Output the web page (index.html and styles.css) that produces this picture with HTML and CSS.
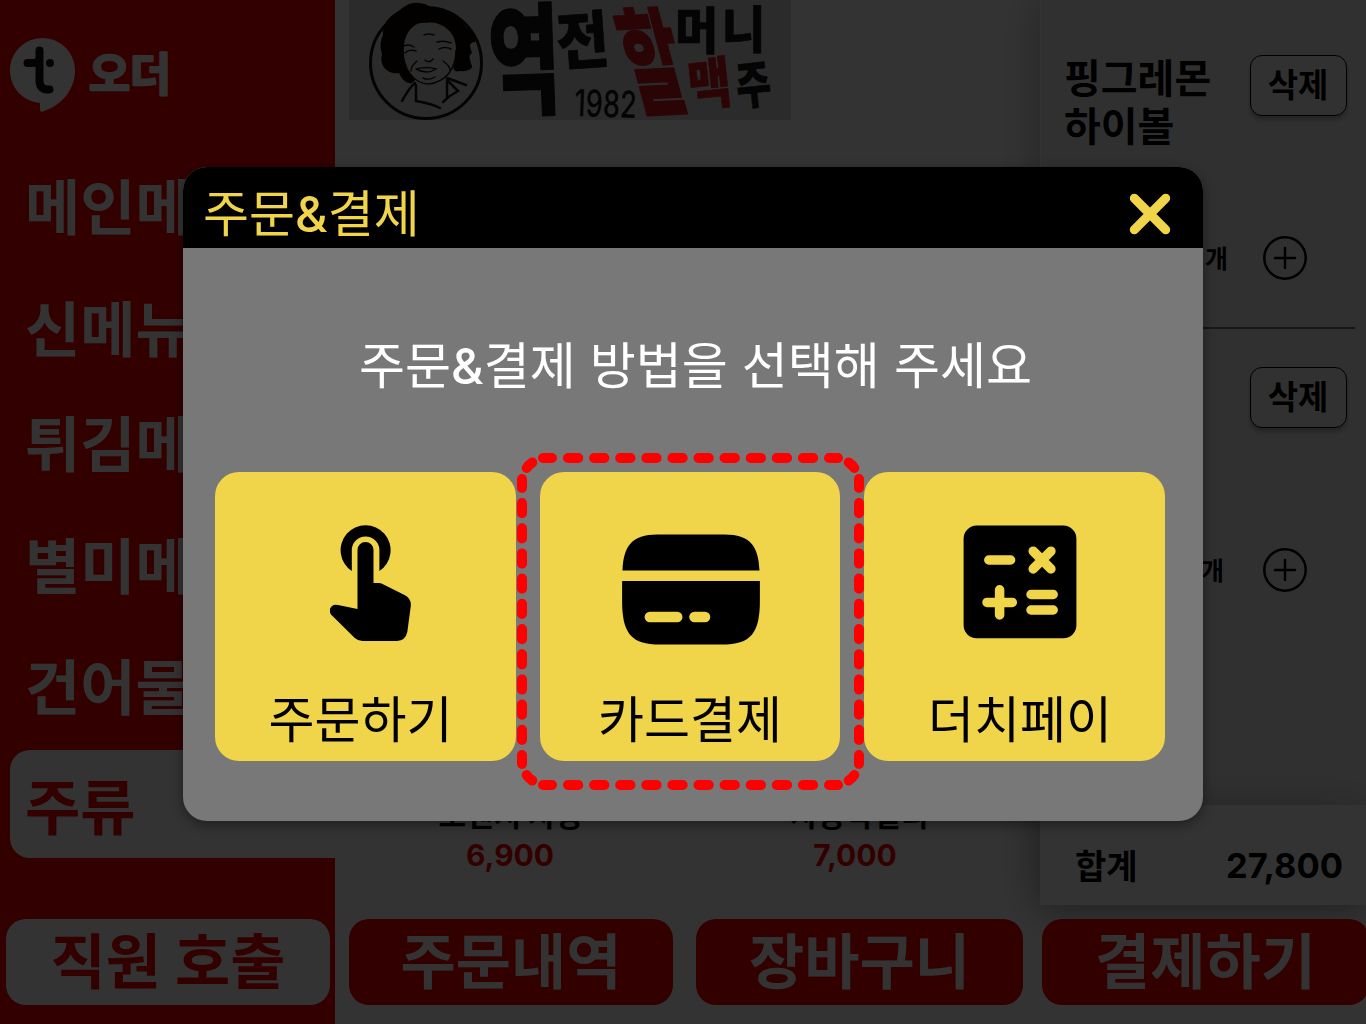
FILE: index.html
```html
<!DOCTYPE html>
<html lang="ko">
<head>
<meta charset="utf-8">
<title>주문&amp;결제</title>
<link rel="stylesheet" href="styles.css">
</head>
<body>
<div class="app">
  <aside class="sidebar">
    <div class="brand">
      <svg class="brand-mark" width="66" height="76" viewBox="0 0 66 76">
        <path fill="#fff" d="M32.500 1C50.500 1 65 15.500 65 33.500C65 54 50 69 33 74.500Q30 75.500 30 73V66C12 64 0 50 0 33.500C0 15.500 14.500 1 32.500 1Z"/>
        <path fill="none" stroke="#111" stroke-width="8" stroke-linecap="round" stroke-linejoin="round" d="M29.500 13.500V44Q29.500 53 39.500 52.500M17.500 26H24Q29 26 29.500 20"/>
        <circle cx="40" cy="26" r="4" fill="#111"/>
      </svg>
      <svg class="brand-name" width="90" height="60" viewBox="0 0 90 60"><text class="wordmark" transform="translate(0 45) scale(.97 .98)">오더</text></svg>
    </div>
    <nav class="menu">
      <a class="menu-item">메인메뉴</a>
      <a class="menu-item">신메뉴</a>
      <a class="menu-item">튀김메뉴</a>
      <a class="menu-item">별미메뉴</a>
      <a class="menu-item">건어물</a>
      <a class="menu-item active">주류</a>
    </nav>
    <button class="call">직원 호출</button>
  </aside>
  <div class="content">
    <div class="upper">
      <main class="catalog">
        <svg class="banner" width="442" height="120" viewBox="0 0 442 120">
          <circle cx="77" cy="63" r="55.500" fill="none" stroke="#111" stroke-width="3"/>
          <path fill="#0d0803" fill-rule="evenodd" d="M34 35C33 20 45 14 51 10C60 1 74 0 84 9C99 7 112 17 116 26C123 31 128 36 126 42C118 43 122 48 123 53C118 56 122 60 122 64C126 68 119 72 111 71C104 73 103 68 106 60C108 50 107 42 104 36C99 27 88 21 77 23C65 21 56 33 55 46C54 61 56 70 66 79C64 87 54 83 50 73C38 75 30 65 33 54C31 47 31 42 34 35Z"/>
          <g fill="none" stroke="#1a1713" stroke-width="1.500" stroke-linecap="round">
            <path d="M54 50C54 69 65 84 80 84C96 82 107 70 107 50M53 47Q59 43 65 47M88 42Q95 40 102 43M56 53Q60 49 67 51M90 49Q96 46 102 49M75 35Q80 33 85 35M68 61Q62 66 62 71M94 61Q101 66 101 70M67 69Q78 66 87 69Q78 75 67 69M76 60Q80 64 84 59M74 78Q80 81 86 77"/>
            <path stroke-width="2.500" d="M66 83Q60 88 53 101M67 85V101Q84 104 91 108M98 80L109 91Q101 95 94 102M98 82V98M98 78L117 85"/>
          </g>
          <g class="brush">
            <text transform="translate(141 106) rotate(-2) scale(.93 1.440)">역</text>
            <text transform="translate(209 65) rotate(-4) scale(.68 .74)">전</text>
            <text class="red" transform="translate(286 106) rotate(-3) skewX(12) scale(.74 1.380)">할</text>
            <text transform="translate(326 49) scale(.56 .6)">머</text>
            <text transform="translate(373 48) scale(.56 .6)">니</text>
            <text class="red" transform="translate(341 106) rotate(-6) scale(.56 .66)">맥</text>
            <text transform="translate(389 105) rotate(-6) scale(.45 .6)">주</text>
            <text class="year" transform="translate(225 116) rotate(2) scale(.8 1.100)">1982</text>
          </g>
        </svg>
        <div class="products">
          <div class="product"><span class="product-name">오렌지 자몽</span><span class="price">6,900</span></div>
          <div class="product"><span class="product-name">자몽막걸리</span><span class="price">7,000</span></div>
        </div>
      </main>
      <section class="cart">
        <div class="cart-list">
          <article class="cart-item">
            <div class="item-head"><h2>핑그레몬<br>하이볼</h2><button class="delete">삭제</button></div>
            <div class="quantity"><span>개</span>
              <svg width="44" height="44" viewBox="0 0 44 44"><g fill="none" stroke="#000" stroke-width="2.500" stroke-linecap="round"><circle cx="22" cy="22" r="20.700"/><path d="M12 22H32M22 12V32"/></g></svg>
            </div>
          </article>
          <article class="cart-item second">
            <div class="item-head"><button class="delete">삭제</button></div>
            <div class="quantity"><span>개</span>
              <svg width="44" height="44" viewBox="0 0 44 44"><g fill="none" stroke="#000" stroke-width="2.500" stroke-linecap="round"><circle cx="22" cy="22" r="20.700"/><path d="M12 22H32M22 12V32"/></g></svg>
            </div>
          </article>
        </div>
        <div class="total"><span>합계</span><strong>27,800</strong></div>
      </section>
    </div>
    <div class="actions">
      <button>주문내역</button>
      <button>장바구니</button>
      <button>결제하기</button>
    </div>
  </div>
</div>
<div class="overlay">
  <div class="modal">
    <header class="modal-head">
      <h1>주문<span class="amp">&amp;</span>결제</h1>
      <svg width="42" height="42" viewBox="0 0 42 42"><path d="M5.300 5.300L36.700 36.700M36.700 5.300L5.300 36.700" stroke="#f0d44a" stroke-width="9" stroke-linecap="round"/></svg>
    </header>
    <p class="prompt">주문<span class="amp">&amp;</span>결제 방법을 선택해 주세요</p>
    <div class="options">
      <div class="option order">
        <svg width="82" height="118" viewBox="329.500 524 82 118">
          <path d="M351.300 571A25 25 0 1 1 378.900 571V550.300A13.800 13.800 0 0 0 351.300 550.300Z"/>
          <path d="M357 550A8 8 0 0 1 373 550V583H377.500Q380.500 583 383 584.400L404.500 595.300Q411 599 410.300 606L406.800 632Q405 640.500 396.500 641H362Q357.500 641 354.300 638L332 616A6.200 6.200 0 0 1 337.500 605L357 609Z"/>
        </svg>
        <span>주문하기</span>
      </div>
      <div class="option card selected">
        <svg width="140" height="112" viewBox="621.500 533 140 112">
          <path d="M623 570.600C624 546 632 534.400 658 534.400H725C751 534.400 759 546 760 570.600ZM622.600 581H760.400V600C760.400 633 752 644.600 722 644.600H661C631 644.600 622.600 633 622.600 600Z"/>
          <path d="M650.400 617H677.700M695 617H705.500" stroke="#f0d44a" stroke-width="10.600" stroke-linecap="round"/>
        </svg>
        <span>카드결제</span>
        <svg class="marker" width="347" height="337" viewBox="517 453 347 337">
          <g fill="none" stroke="#f00" stroke-width="10" stroke-linecap="round">
            <path stroke-dasharray="10.300 15.800" d="M568 458H814M568 785H814"/>
            <path stroke-dasharray="10.200 15" d="M522 503V741M859 503V741"/>
            <path d="M543 458H552M829 458H838M543 785H552M829 785H838M522 479V488M522 755V764M859 479V488M859 755V764"/>
            <path d="M526.700 468Q528.500 465 532.300 462.500M854.300 468Q852.500 465 848.700 462.500M526.700 775Q528.500 778 532.300 780.500M854.300 775Q852.500 778 848.700 780.500"/>
          </g>
        </svg>
      </div>
      <div class="option dutch">
        <svg width="114" height="114" viewBox="963 525 114 114">
          <rect x="963.600" y="525.600" width="112.800" height="112.700" rx="13"/>
          <path d="M988.800 560H1010.600M1033.200 551.200L1050.900 568.900M1050.900 551.200L1033.200 568.900M987 602.400H1012.300M999.600 589.800V615M1031 594.500H1053.200M1031 610H1053.200" stroke="#f0d44a" stroke-width="9.500" stroke-linecap="round"/>
        </svg>
        <span>더치페이</span>
      </div>
    </div>
  </div>
</div>
</body>
</html>
```
FILE: styles.css
```css
* { box-sizing: border-box; }
body {
  margin: 0;
  width: 1366px;
  height: 1024px;
  overflow: hidden;
  font-family: Inter, "Noto Sans CJK KR", sans-serif;
  color: #000;
}
h1, h2, p { margin: 0; }
button { font: inherit; color: inherit; border: 0; padding: 0; }
svg { display: block; flex: none; }

.app { display: flex; width: 1366px; height: 1024px; background: #fff; }

.sidebar {
  width: 335px;
  flex: none;
  display: flex;
  flex-direction: column;
  background: #f00;
}
.brand { display: flex; height: 150px; padding: 37px 0 0 10px; }
.brand-name { margin: 9px 0 0 13px; }
.wordmark { font-size: 46px; font-weight: 700; fill: #fff; stroke: #fff; stroke-width: 2.500; stroke-linejoin: round; }
.menu { display: flex; flex-direction: column; gap: 13px; padding-left: 10px; }
.menu-item {
  height: 108px;
  padding-left: 15px;
  line-height: 116px;
  font-size: 60px;
  font-weight: 700;
  color: #fff;
  white-space: nowrap;
}
.menu-item:nth-child(2) { margin-top: 1px; }
.menu-item:nth-child(3) { margin-top: -6px; }
.menu-item:nth-child(4) { margin-top: 1px; }
.menu-item:nth-child(6) { margin-top: -1px; }
.menu-item.active { background: #fff; color: #f00; border-radius: 20px 0 0 20px; }
.call {
  width: 324px;
  height: 86px;
  margin: auto 0 19px 6px;
  border-radius: 20px;
  background: #fff;
  color: #f00;
  font-size: 60px;
  font-weight: 700;
  line-height: 86px;
}

.content { flex: 1; min-width: 0; display: flex; flex-direction: column; }
.upper { display: flex; height: 905px; }
.catalog {
  width: 705px;
  flex: none;
  display: flex;
  flex-direction: column;
  justify-content: space-between;
  padding: 0 0 32px 14px;
}
.banner { background: #d7d7d7; }
.brush {
  font-family: "Noto Sans CJK KR", sans-serif;
  font-weight: 900;
  font-size: 84px;
  fill: #141414;
  stroke: #141414;
  stroke-width: 1;
  stroke-linejoin: round;
}
.brush .red { fill: #d8000f; stroke: #d8000f; opacity: .9; }
.brush .year { font-family: Inter, sans-serif; font-size: 34px; font-weight: 500; stroke: none; }
.products { display: flex; gap: 24px; }
.product { width: 322px; display: flex; flex-direction: column; align-items: center; }
.product-name { font-size: 30px; line-height: 36px; font-weight: 700; margin: -4px 0 4px; padding-left: 2px; }
.product:nth-child(2) .product-name { padding-left: 7px; }
.product:nth-child(2) .price { padding-right: 2px; }
.price { font-size: 30px; line-height: 36px; font-weight: 700; color: #f00; }

.cart {
  width: 326px;
  display: flex;
  flex-direction: column;
  box-shadow: 0 0 40px rgba(0, 0, 0, .3);
}
.cart-list { height: 805px; padding: 55px 11px 0 23px; margin-left: 1px; background: #f0f0f0; }
.cart-item { height: 274px; border-bottom: 2px solid #777; }
.cart-item.second { border: 0; margin-top: 38px; }
.item-head { display: flex; justify-content: space-between; height: 181px; padding-right: 8px; }
.second .item-head { justify-content: flex-end; }
.item-head h2 { font-size: 40px; line-height: 48px; font-weight: 700; white-space: nowrap; }
.delete {
  width: 97px;
  height: 61px;
  padding-right: 1px;
  border: 1px solid #000;
  border-radius: 12px;
  background: #f3f3f3;
  box-shadow: 0 4px 4px rgba(0, 0, 0, .25);
  font-size: 33px;
  font-weight: 700;
  line-height: 57px;
}
.quantity { display: flex; justify-content: flex-end; align-items: center; gap: 35px; padding-right: 48px; font-size: 25px; font-weight: 700; }
.quantity span { padding-bottom: 2px; }
.second .quantity { gap: 39px; }
.total {
  height: 100px;
  display: flex;
  align-items: center;
  justify-content: space-between;
  padding: 21px 23px 0 35px;
  background: #fff;
  box-shadow: 0 0 40px rgba(0, 0, 0, .2);
  font-size: 34px;
  font-weight: 700;
}
.total span { padding-bottom: 3px; }
.total strong { font-size: 34.500px; font-weight: 700; }
.actions { display: flex; gap: 19px; padding: 14px 0 0 14px; }
.actions button {
  width: 324px;
  height: 86px;
  flex: none;
  border-radius: 20px;
  background: #f00;
  color: #fff;
  font-size: 60px;
  font-weight: 700;
  line-height: 86px;
}
.actions button:nth-child(2) { width: 327px; margin-left: 4px; }
.actions button:nth-child(3) { width: 327px; }

.overlay { position: absolute; inset: 0; padding: 167px 0 0 183px; background: rgba(0, 0, 0, .8); }
.modal {
  width: 1020px;
  height: 654px;
  border-radius: 24px;
  overflow: hidden;
  background: #787878;
  box-shadow: 0 4px 12px rgba(0, 0, 0, .4);
}
.modal-head {
  height: 81px;
  display: flex;
  align-items: center;
  justify-content: space-between;
  padding: 12px 32px 0 20px;
  background: #000;
  color: #f0d44a;
}
.modal-head h1 { font-size: 50px; font-weight: 400; line-height: 60px; }
.amp { font-weight: 500; }
.prompt {
  height: 224px;
  padding: 88px 0 0 5px;
  text-align: center;
  color: #fff;
  font-size: 50px;
  font-weight: 400;
  line-height: 60px;
}
.options { display: grid; grid-template-columns: 301px 300px 301px; gap: 24px; padding-left: 32px; }
.option {
  height: 289px;
  display: flex;
  flex-direction: column;
  align-items: center;
  justify-content: space-between;
  border-radius: 24px;
  background: #f0d44a;
  font-size: 50px;
  line-height: 60px;
  padding: 52px 0 11px;
}
.order { padding-right: 10px; }
.order svg { margin-left: 20px; }
.card { padding-top: 61px; }
.card svg:first-child { margin-left: 2px; }
.dutch { padding: 53px 0 11px 11px; }
.selected { position: relative; }
.marker { position: absolute; left: -23px; top: -19px; }
```
